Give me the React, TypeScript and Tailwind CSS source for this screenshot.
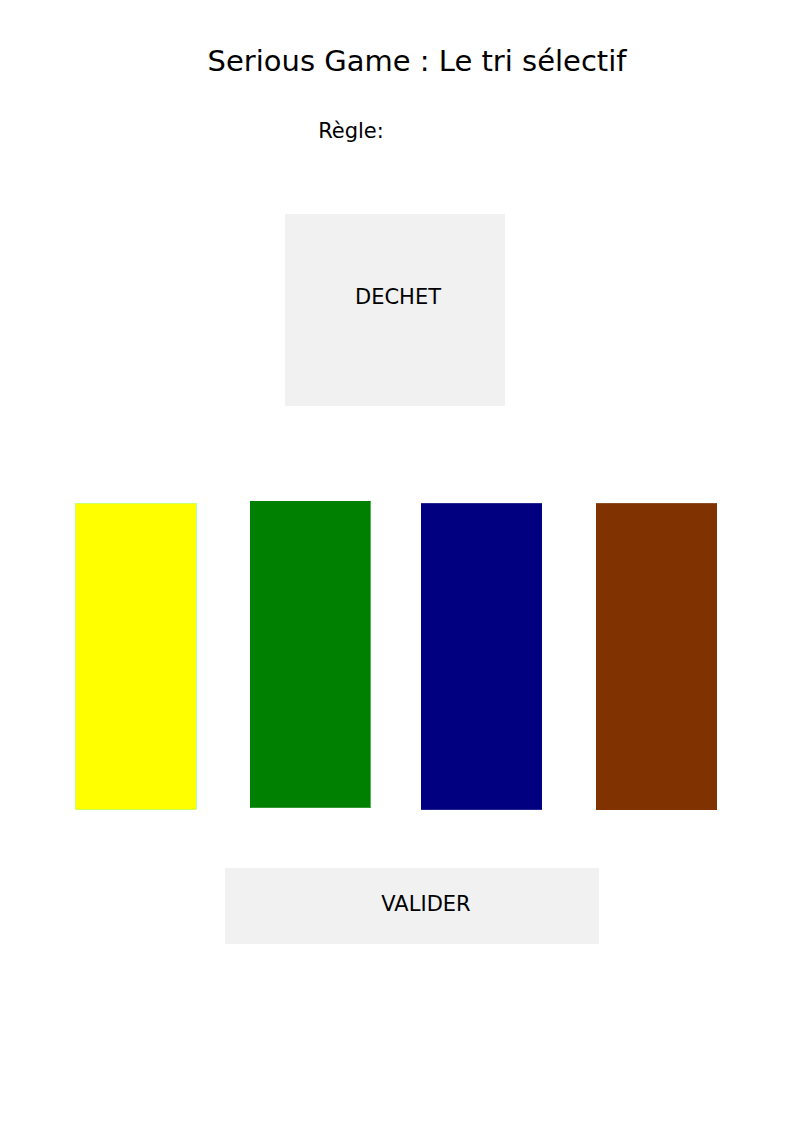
const binPairs = [
  [
    { name: "Bac jaune", look: "w-[122px] bg-[#ffff00] border border-[#ccff66] border-r-[#b3ffb3]" },
    { name: "Bac vert", look: "w-[121px] bg-[#008000] border border-[#008000] border-r-[#4db84d] border-b-[#339933] -translate-y-0.5" },
  ],
  [
    { name: "Bac bleu", look: "w-[121px] bg-[#000080] border-y border-[#26268f]" },
    { name: "Bac marron", look: "w-[121px] bg-[#803300] border-t border-[#8f4d26]" },
  ],
];

export default function App() {
  return (
    <main className="min-h-screen bg-white pb-16 font-['DejaVu_Sans',sans-serif] text-black">
      <header className="flex flex-col items-center">
        <h1 className="mt-[41px] pl-10 text-[29px] leading-10">Serious Game : Le tri sélectif</h1>
        <p className="mt-9 pr-[92px] text-[21px] leading-7">Règle:</p>
      </header>

      <section className="mt-[69px] flex justify-center pr-1">
        <div className="flex h-48 w-[220px] items-center justify-center bg-[#f1f1f1] pb-[26px] pl-[6px] text-[21px] leading-7">
          DECHET
        </div>
      </section>

      <section className="mt-[97px] flex justify-between pr-[77px] pl-[75px]">
        {binPairs.map((pair) => (
          <div key={pair[0].name} className="flex w-[296px] justify-between">
            {pair.map((bin) => (
              <button
                key={bin.name}
                type="button"
                aria-label={bin.name}
                className={`h-[307px] ${bin.look}`}
              />
            ))}
          </div>
        ))}
      </section>

      <div className="mt-[58px] flex justify-center pl-[30px]">
        <button
          type="button"
          className="h-[76px] w-[374px] bg-[#f1f1f1] pb-1 pl-7 text-[21px] leading-7"
        >
          VALIDER
        </button>
      </div>
    </main>
  );
}
